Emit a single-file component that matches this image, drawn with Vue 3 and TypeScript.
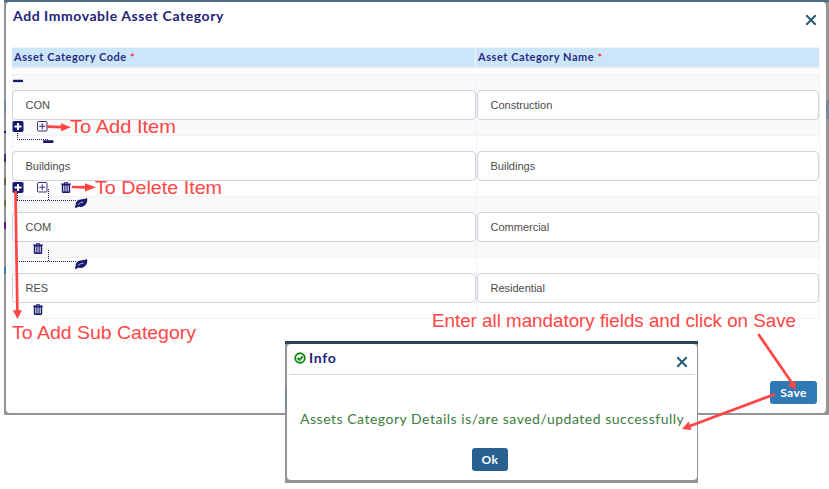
<script setup lang="ts">
interface AssetRow {
  code: string
  name: string
  kind: 'root' | 'branch' | 'leaf'
  actions: Array<'sub' | 'item' | 'trash'>
}

const rows: AssetRow[] = [
  { code: 'CON', name: 'Construction', kind: 'root', actions: ['sub', 'item'] },
  { code: 'Buildings', name: 'Buildings', kind: 'branch', actions: ['sub', 'item', 'trash'] },
  { code: 'COM', name: 'Commercial', kind: 'leaf', actions: ['trash'] },
  { code: 'RES', name: 'Residential', kind: 'leaf', actions: ['trash'] },
]
</script>

<template>
  <div class="page">
    <div class="backdrop">
      <i class="sliver s1"></i><i class="sliver s2"></i><i class="sliver s3"></i><i class="sliver s4"></i><i class="sliver s5"></i><i class="sliver s6"></i><i class="sliver s7"></i><i class="sliver s8"></i>
      <section class="modal">
        <header class="modal-head">
          <h1>Add Immovable Asset Category</h1>
          <svg class="close" viewBox="0 0 12 12"><path d="M1.3 1.3 10.7 10.7M10.7 1.3 1.3 10.7" /></svg>
        </header>
        <div class="table-head">
          <div class="th th-code">Asset Category Code <b>*</b></div>
          <div class="th th-name">Asset Category Name <b>*</b></div>
        </div>
        <div class="table">
          <div v-for="(row, i) in rows" :key="i" class="row" :class="row.kind">
            <div class="cell">
              <div class="tree">
                <svg v-if="row.kind === 'root'" class="minus" viewBox="0 0 10 3"><rect width="10" height="2.8" rx=".7" /></svg>
                <svg v-else-if="row.kind === 'branch'" class="connector" viewBox="0 0 80 24">
                  <path class="dots" d="M5.5 6V12.5H36" />
                  <rect x="31" y="13.2" width="10.5" height="2.8" rx=".7" />
                </svg>
                <svg v-else class="connector" viewBox="0 0 80 24">
                  <path class="dots" d="M36.5 1V12.5M5 12.5H64" />
                  <path class="dots" v-if="row.code === 'COM'" d="M5.5 5V12" />
                  <path d="M63 19.2C62.7 18.2 63.8 17.8 63.7 16.8C63.7 13 66.4 11.5 70 11.3C72.6 11.2 73.8 10.8 75 9.8C76.2 14.6 73 19.2 68.3 19C66.8 18.9 66.2 18.4 65.4 19L64 20.2Z" />
                  <path class="vein" d="M66 16.8C67.4 15.2 69 14.3 71.5 14.2" />
                </svg>
              </div>
              <div class="field">{{ row.code }}</div>
              <div class="actions" :class="{ only: row.actions.length === 1 }">
                <svg v-for="a in row.actions" :key="a" viewBox="0 0 12 12" :class="a">
                  <template v-if="a === 'sub'">
                    <rect x=".5" y=".5" width="11" height="11" rx="1.6" />
                    <path class="cross" d="M6 2.5V9.5M2.5 6H9.5" />
                  </template>
                  <template v-else-if="a === 'item'">
                    <rect class="box" x="1.5" y="1.5" width="9.5" height="9.5" rx="1" />
                    <path class="thin" d="M6.25 3.2V9.3M3.2 6.25H9.3" />
                  </template>
                  <template v-else>
                    <path fill-rule="evenodd" d="M1 2H3.8L4.6.5H7.4L8.2 2H11V3.2H10.2V10.4Q10.2 11.6 9 11.6H3Q1.8 11.6 1.8 10.4V3.2H1ZM5 2H7L6.7 1.4H5.3ZM3.3 4V10H4.3V4ZM5.5 4V10H6.5V4ZM7.7 4V10H8.7V4Z" />
                  </template>
                </svg>
              </div>
            </div>
            <div class="cell name-cell">
              <div class="tree"></div>
              <div class="field">{{ row.name }}</div>
            </div>
          </div>
        </div>
        <footer><button class="save">Save</button></footer>
      </section>
    </div>

    <div class="info-shell">
      <i class="info-sliver"></i>
      <section class="info">
        <header>
          <svg class="check" viewBox="0 0 12 12"><circle cx="6" cy="6" r="4.8" /><path d="M3.5 6 5.4 7.9 8.7 4.5" /></svg>
          <h2>Info</h2>
          <svg class="close" viewBox="0 0 12 12"><path d="M1.3 1.3 10.7 10.7M10.7 1.3 1.3 10.7" /></svg>
        </header>
        <p>Assets Category Details is/are saved/updated successfully</p>
        <div class="ok-row"><button class="ok">Ok</button></div>
      </section>
    </div>

    <svg class="notes" viewBox="0 0 829 489">
      <g class="line">
        <path d="M48 126.6 62 127.2" /><path d="M73 187 87 187.3" />
        <path d="M15.5 192 17.4 312" /><path d="M759 335 792 383" /><path d="M774 394.5 690 426" />
      </g>
      <g class="tips">
        <path d="M71 127.3 61 131.3V123.3Z" /><path d="M96 187.3 85 191.5V183.2Z" />
        <path d="M17.5 319 12.8 310.3H22Z" /><path d="M796 389.5 787.7 385.5 795 380.5Z" /><path d="M682 429 688.7 421.6 691.5 430Z" />
      </g>
      <text x="70" y="133.4" textLength="106" lengthAdjust="spacingAndGlyphs">To Add Item</text>
      <text x="95" y="193.5" textLength="127" lengthAdjust="spacingAndGlyphs">To Delete Item</text>
      <text x="12" y="339.3" textLength="184" lengthAdjust="spacingAndGlyphs">To Add Sub Category</text>
      <text x="432" y="327.2" textLength="364" lengthAdjust="spacingAndGlyphs">Enter all mandatory fields and click on Save</text>
    </svg>
  </div>
</template>

<style>
body { margin: 0; background: #fff; overflow: hidden; }
</style>
<style scoped>
* { box-sizing: border-box; }
.page { position: relative; width: 829px; height: 489px; background: #fff; font-family: Lato, "Liberation Sans", sans-serif; overflow: hidden; }
.backdrop { position: relative; margin-left: 4px; width: 825px; height: 415px; padding: 2px 3px 2px 2px; background: #949494; box-shadow: inset 0 2px #4b6e8b; }
.sliver { position: absolute; left: 0; width: 2px; height: 3px; background: #34547a; }
.s1 { top: 100px; height: 14px; background: #748b9c; }
.s2 { top: 131px; height: 2px; background: #191970; }
.s3 { top: 154px; height: 8px; background: #35358a; }
.s4 { top: 178px; height: 7px; background: #665f45; }
.s5 { top: 200px; height: 6px; background: #80683e; }
.s6 { top: 222px; height: 7px; background: #64168a; }
.s7 { top: 267px; height: 7px; background: #347aaf; }
.s8 { left: auto; right: 0; top: 100px; width: 3px; height: 19px; background: #748b9c; }
.modal { width: 820px; height: 411px; padding: 0 6px; background: #fff; border-radius: 4px; display: flex; flex-direction: column; }
.modal-head { height: 45px; display: flex; justify-content: space-between; padding: 5px 3.5px 0 1px; }
h1, h2 { margin: 0; color: #23237a; font-size: 14px; line-height: 17px; font-weight: 700; letter-spacing: .56px; white-space: nowrap; }
.close { width: 12px; height: 12px; margin-top: 7px; fill: none; stroke: #265a77; stroke-width: 2; }
.table-head { display: flex; height: 22px; width: 808px; border: 1px solid #f3f3f3; border-bottom-width: 2px; border-left: 0; background: #cbe6f9; }
.th { height: 19px; padding-left: 2px; color: #2b2b83; font-size: 11px; line-height: 18px; font-weight: 700; letter-spacing: .54px; white-space: nowrap; }
.th-code { width: 464px; border-right: 1px solid #f3f3f3; }
.th b { position: relative; top: 1px; color: #f00; font-weight: 400; }
.table { width: 808px; margin-top: 5px; border-bottom: 1px solid #f2f2f2; }
.row { display: grid; grid-template-columns: 463px 343px; height: 61px; border-top: 1px solid #f2f2f2; border-right: 1px solid #f2f2f2; border-left: 1px solid #f2f2f2; }
.row:nth-child(odd) { background: #f9f9f9; }
.name-cell { border-left: 1px solid #f2f2f2; }
.tree { position: relative; height: 15px; }
.minus { display: block; width: 10px; height: 3px; transform: translateY(4.5px); fill: #191970; }
.connector { position: absolute; left: -1px; top: -9px; width: 80px; height: 24px; fill: #191970; }
.dots { fill: none; stroke: #191970; stroke-width: 1; stroke-dasharray: 1 1; }
.vein { fill: none; stroke: #fff; stroke-width: .7; }
.field { height: 30px; width: 464px; margin-left: -1px; padding-left: 12.5px; border: 1px solid #d0d2df; border-radius: 4px; background: #fff; color: #4b4b4b; font: 11px/28px "Liberation Sans", sans-serif; }
.name-cell .field { width: 342px; margin-left: 0; }
.actions { display: flex; gap: 12px; height: 15px; margin-left: -1px; }
.actions svg { display: block; width: 12px; height: 12px; fill: #191970; transform: translateY(.4px); }
.actions .item { transform: translateY(0); }
.actions.only { padding-left: 19.5px; }
.actions .cross { fill: none; stroke: #fff; stroke-width: 2; }
.actions .box, .actions .thin { fill: none; stroke: #34347f; stroke-width: 1; }
footer { display: flex; justify-content: flex-end; margin-top: auto; padding: 0 3px 9px 0; }
button { border: 0; padding: 0; color: #fff; font: 700 12px/23px Lato, sans-serif; letter-spacing: .4px; border-radius: 3px; }
.save { width: 47px; height: 23px; background: #2f7ab5; }
.info-shell { position: absolute; left: 285px; top: 341px; width: 413px; height: 142px; padding: 3px 1px 3px 2px; background: #949494; box-shadow: inset 0 3px #2c4459; }
.info-sliver { position: absolute; left: 0; top: 49px; width: 2px; height: 19px; background: #748b9c; }
.info { height: 136px; background: #fff; border-radius: 4px; padding: 0 2px; }
.info header { display: flex; height: 31px; border-bottom: 1px solid #d8d8d8; padding: 5px 7.5px 0 5px; }
.check { width: 12px; height: 12px; margin-top: 3px; fill: none; stroke: #128b12; stroke-width: 1.9; }
.info h2 { margin-left: 3px; letter-spacing: .7px; }
.info .close { margin-left: auto; }
.info p { margin: 35px 0 0 11px; color: #3d7c40; font-size: 14px; line-height: 18px; letter-spacing: .51px; white-space: nowrap; }
.ok-row { display: flex; padding: 20px 0 0 183px; }
.ok { width: 36px; height: 23px; background: #286090; }
.notes { position: absolute; left: 0; top: 0; width: 829px; height: 489px; pointer-events: none; }
.notes .line { fill: none; stroke: #ff4545; stroke-width: 2.7; stroke-linecap: round; }
.notes .tips { fill: #ff4545; }
.notes text { fill: #ff4545; font: 19px "Liberation Sans", sans-serif; }
</style>
